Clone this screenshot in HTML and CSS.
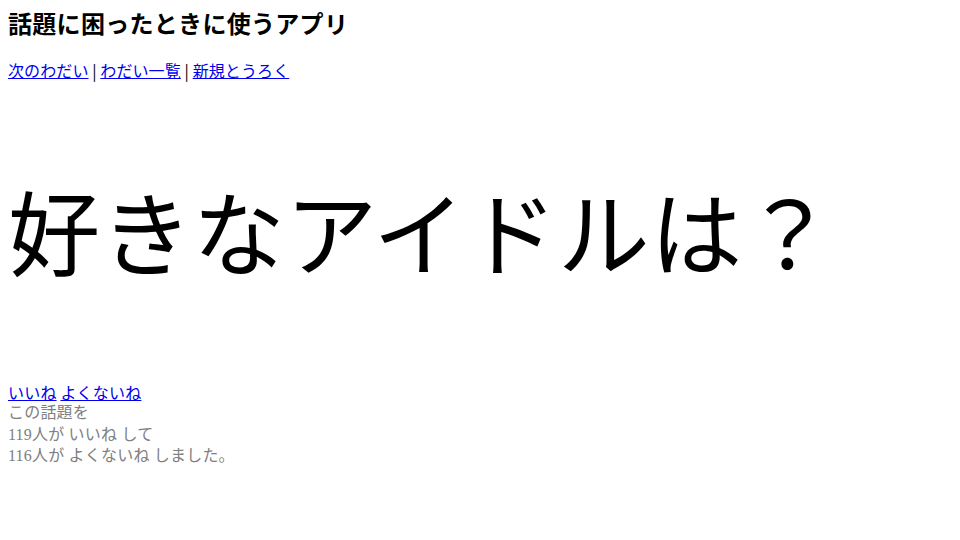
FILE: index.html
```html
<!DOCTYPE html>
<html lang="ja">
<head>
<meta charset="utf-8">
<title>話題に困ったときに使うアプリ</title>
<link rel="stylesheet" href="styles.css">
</head>
<body>
<h1 class="title">話題に困ったときに使うアプリ</h1>
<nav class="nav"><a href="#">次のわだい</a> | <a href="#">わだい一覧</a> | <a href="#">新規とうろく</a></nav>
<div class="topic">好きなアイドルは？</div>
<div class="votes"><a href="#">いいね</a> <a href="#">よくないね</a></div>
<div class="stats">
<div class="stat-line">この話題を</div>
<div class="stat-line">119人が いいね して</div>
<div class="stat-line">116人が よくないね しました。</div>
</div>
</body>
</html>
```
FILE: styles.css
```css
body {
  margin: 8px;
  font-family: "Liberation Serif", "Noto Sans CJK JP", serif;
  font-size: 16px;
  letter-spacing: 0.2px;
  color: #000;
  background: #fff;
}
a { color: #0000ee; }
.title {
  margin: 0;
  font-family: "Noto Sans CJK JP", sans-serif;
  font-size: 24px;
  font-weight: bold;
  letter-spacing: 0.3px;
  line-height: 30px;
}
.nav {
  margin-top: 22px;
  font-family: "Noto Sans CJK JP", sans-serif;
  letter-spacing: 0.1px;
  line-height: 20px;
}
.topic {
  margin-top: 103px;
  font-family: "Noto Sans CJK JP", sans-serif;
  font-weight: normal;
  font-size: 92px;
  letter-spacing: 0.4px;
  line-height: 92px;
  white-space: nowrap;
}
.votes {
  margin-top: 107px;
  font-family: "Noto Sans CJK JP", sans-serif;
  line-height: 20px;
}
.stats {
  color: #808080;
}
.stat-line {
  line-height: 21.5px;
}
```
